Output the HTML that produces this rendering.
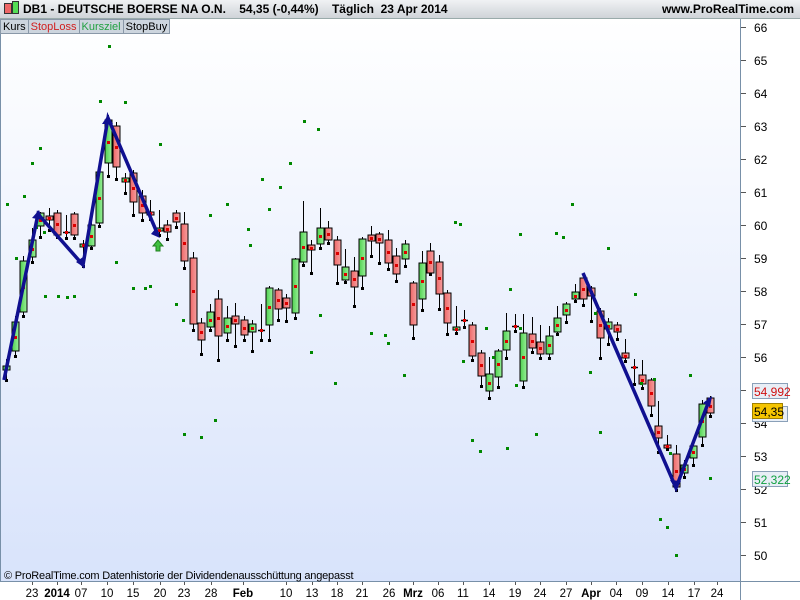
<!DOCTYPE html>
<html><head><meta charset="utf-8"><style>
html,body{margin:0;padding:0;width:800px;height:600px;overflow:hidden;background:#fff;font-family:"Liberation Sans",sans-serif}
#hdr{position:absolute;left:0;top:0;width:800px;height:18px;background:linear-gradient(#f0f2f4,#cfd3d8);border-bottom:1px solid #9aa;font-weight:bold;font-size:12px;line-height:18px}
#tabs{position:absolute;left:0;top:19px;height:15px;display:flex;font-size:11px;line-height:15px}
#tabs div{background:#cdd5de;border:1px solid #8a98a8;padding:0 2px;margin-right:-1px}
</style></head><body>
<svg width="800" height="600" style="position:absolute;left:0;top:0">
<defs><linearGradient id="bg" x1="0" y1="0" x2="0" y2="1"><stop offset="0" stop-color="#ffffff"/><stop offset="1" stop-color="#d8e3fb"/></linearGradient>
<linearGradient id="rd" x1="0" x2="1"><stop offset="0" stop-color="#e66"/><stop offset="1" stop-color="#f5a0a0"/></linearGradient>
<linearGradient id="gr" x1="0" x2="1"><stop offset="0" stop-color="#4fd04f"/><stop offset="1" stop-color="#9af09a"/></linearGradient>
</defs>
<rect x="0" y="18" width="740" height="563" fill="url(#bg)"/>
<line x1="0.5" y1="18" x2="0.5" y2="581" stroke="#7890a8"/>
<line x1="740.5" y1="18" x2="740.5" y2="600" stroke="#7890a8"/>
<line x1="0" y1="581.5" x2="800" y2="581.5" stroke="#7890a8"/>
<g id="ax" font-size="12" fill="#000"></g>
<g id="g"></g>
<g font-size="11.5" text-anchor="middle">
<text x="32" y="597">23</text><text x="57" y="597" font-weight="bold">2014</text><text x="81" y="597">07</text><text x="107" y="597">10</text><text x="133" y="597">15</text><text x="160" y="597">20</text><text x="184" y="597">23</text><text x="211" y="597">28</text><text x="243" y="597" font-weight="bold">Feb</text><text x="286" y="597">10</text><text x="312" y="597">13</text><text x="337" y="597">18</text><text x="362" y="597">21</text><text x="389" y="597">26</text><text x="413" y="597" font-weight="bold">Mrz</text><text x="438" y="597">06</text><text x="463" y="597">11</text><text x="489" y="597">14</text><text x="515" y="597">19</text><text x="540" y="597">24</text><text x="566" y="597">27</text><text x="591" y="597" font-weight="bold">Apr</text><text x="616" y="597">04</text><text x="642" y="597">09</text><text x="668" y="597">14</text><text x="694" y="597">17</text><text x="717" y="597">24</text>
</g>
<g font-size="12">
<text x="754" y="32">66</text><text x="754" y="65">65</text><text x="754" y="98">64</text><text x="754" y="131">63</text><text x="754" y="164">62</text><text x="754" y="197">61</text><text x="754" y="230">60</text><text x="754" y="263">59</text><text x="754" y="296">58</text><text x="754" y="329">57</text><text x="754" y="362">56</text><text x="754" y="428">54</text><text x="754" y="461">53</text><text x="754" y="494">52</text><text x="754" y="527">51</text><text x="754" y="560">50</text>
</g>
<rect x="752.5" y="383.5" width="35" height="15" fill="#e8eef6" stroke="#8aa0b8"/><text x="754" y="396" font-size="12" fill="#d01010">54,992</text>
<rect x="752.5" y="406.5" width="35" height="15" fill="#e8eef6" stroke="#8aa0b8"/><text x="776" y="419" font-size="12">3</text>
<rect x="752.5" y="403.5" width="30" height="15" fill="#f5c400" stroke="#a08000"/><text x="754" y="416" font-size="12">54,35</text>
<rect x="752.5" y="471.5" width="35" height="15" fill="#e8eef6" stroke="#8aa0b8"/><text x="754" y="484" font-size="12" fill="#10a040">52,322</text>
<path d="M4 380L38 214L83 265L108 118L158 235" fill="none" stroke="#101090" stroke-width="3.5"/>
<path d="M583 273L676 488L710 398" fill="none" stroke="#101090" stroke-width="3.5"/>
<path d="M32 218L39 210L43 220Z M76 262L85 268L83 257Z M102 124L108 115L113 124Z M151 234L160 238L156 228Z M670 480L676 490L681 481Z M703 403L712 396L710 407Z" fill="#101090"/>
<path d="M158 240L153 246H156V251H160V246H163Z" fill="#40c040" stroke="#208020"/>
<text x="4" y="579" font-size="11" letter-spacing="-0.2">© ProRealTime.com  Datenhistorie der Dividendenausschüttung angepasst</text>
</svg>
<div id="hdr"><span style="position:absolute;left:4px;top:3px;width:6px;height:9px;background:#e66;border:1px solid #333"></span><span style="position:absolute;left:12px;top:1px;width:5px;height:11px;background:#5d5;border:1px solid #333"></span><span style="position:absolute;left:23px">DB1 - DEUTSCHE BOERSE NA O.N.&nbsp;&nbsp;&nbsp;&nbsp;54,35 (-0,44%)&nbsp;&nbsp;&nbsp;&nbsp;Täglich&nbsp;&nbsp;23 Apr 2014</span><span style="position:absolute;right:6px">www.ProRealTime.com</span></div>
<div id="tabs"><div>Kurs</div><div style="color:#d02020">StopLoss</div><div style="color:#20a040">Kursziel</div><div>StopBuy</div></div>
<script>
var ax=document.getElementById('ax'),s='';
for(var p=50;p<=66;p++){var y=27+(66-p)*33;s+='<line x1="741" x2="746" y1="'+(y+.5)+'" y2="'+(y+.5)+'" stroke="#555"/>';}
[32,57,81,107,133,160,184,211,243,286,312,337,362,389,413,438,463,489,515,540,566,591,616,642,668,694,717].forEach(function(x){s+='<line x1="'+(x+.5)+'" x2="'+(x+.5)+'" y1="582" y2="585" stroke="#555"/>';});
ax.innerHTML=s;
var C=[[6,366,370,359,380,'g'],[15,322,351,316,356,'g'],[23,261,312,256,316,'g'],[32,240,257,228,262,'g'],[40,213,226,212,237,'g'],[49,216,220,208,230,'r'],[57,213,235,210,237,'r'],[66,232,232,215,238,'x'],[74,214,235,212,238,'r'],[83,244,246,240,266,'g'],[91,225,246,222,248,'g'],[99,172,223,165,226,'g'],[108,120,163,115,176,'g'],[116,126,167,122,179,'r'],[125,178,182,173,193,'g'],[133,173,202,170,215,'r'],[142,196,213,190,220,'r'],[150,212,214,200,219,'r'],[159,228,231,210,235,'g'],[167,225,232,220,239,'r'],[176,213,222,210,227,'r'],[184,224,261,212,268,'r'],[193,258,324,252,330,'r'],[201,323,340,318,354,'r'],[210,312,327,304,330,'g'],[218,299,336,290,360,'r'],[227,318,333,306,340,'g'],[235,316,324,303,346,'r'],[244,320,335,316,340,'r'],[252,324,332,320,351,'g'],[261,330,330,304,340,'x'],[269,288,325,286,340,'g'],[278,290,309,288,320,'r'],[286,298,308,294,321,'r'],[295,259,313,258,318,'g'],[303,232,262,201,265,'g'],[311,245,250,240,273,'r'],[320,228,244,208,248,'g'],[328,228,240,221,243,'r'],[337,240,265,236,283,'r'],[345,267,280,249,282,'g'],[354,271,287,257,306,'r'],[362,239,276,237,288,'g'],[371,235,241,226,256,'r'],[379,234,243,232,263,'r'],[388,240,263,230,269,'r'],[396,256,274,248,281,'r'],[405,244,259,240,266,'g'],[413,283,325,281,338,'r'],[422,263,299,251,310,'g'],[430,251,273,243,274,'r'],[439,262,294,255,309,'r'],[447,293,323,290,334,'r'],[456,327,330,306,333,'g'],[464,320,320,310,327,'x'],[472,325,356,322,360,'r'],[481,353,376,350,386,'r'],[489,374,391,357,398,'g'],[498,351,377,349,387,'g'],[506,331,350,313,358,'g'],[515,326,326,314,331,'x'],[523,333,381,314,387,'g'],[532,334,348,317,352,'r'],[540,342,354,325,358,'r'],[549,336,354,326,358,'g'],[557,318,332,306,334,'g'],[566,304,315,302,322,'g'],[575,292,299,284,301,'g'],[583,278,299,274,305,'r'],[591,288,296,286,321,'r'],[600,311,338,308,358,'r'],[608,322,329,318,344,'g'],[617,325,332,322,339,'r'],[625,353,358,339,361,'r'],[634,367,367,359,384,'x'],[642,375,384,360,388,'r'],[651,380,406,378,415,'r'],[658,426,438,401,452,'r'],[667,445,446,435,449,'r'],[676,454,487,445,490,'r'],[684,465,473,460,477,'g'],[693,446,458,440,465,'g'],[702,404,437,400,445,'g'],[710,398,413,396,416,'r']];
var G=[[109,46],[100,101],[125,102],[160,144],[40,148],[32,163],[24,196],[7,204],[16,258],[45,296],[58,296],[67,297],[74,296],[116,262],[133,288],[145,288],[150,286],[176,304],[183,320],[184,434],[201,437],[215,420],[210,215],[227,204],[269,209],[304,121],[318,129],[290,163],[280,187],[250,245],[248,229],[262,179],[320,315],[311,352],[335,383],[371,333],[385,335],[388,343],[404,375],[463,361],[472,440],[493,357],[486,328],[480,451],[460,224],[510,289],[516,385],[507,448],[520,234],[536,434],[556,233],[563,237],[572,204],[595,313],[608,248],[590,372],[600,432],[635,294],[641,383],[654,379],[660,519],[667,527],[676,555],[670,453],[690,375],[710,478],[455,222],[520,328],[36,227],[44,232]];
s='';
C.forEach(function(c){var x=c[0],t=c[1],b=c[2];
s+='<line x1="'+(x+.5)+'" x2="'+(x+.5)+'" y1="'+c[3]+'" y2="'+c[4]+'" stroke="#000"/>';
s+='<rect x="'+(x-1)+'" y="'+(c[4]-1)+'" width="3" height="3" fill="#000"/>';
if(c[5]=='x'){s+='<line x1="'+(x-3)+'" x2="'+(x+4)+'" y1="'+(t+.5)+'" y2="'+(t+.5)+'" stroke="#000" stroke-width="1.5"/>';}
else{var h=Math.max(b-t,3);s+='<rect x="'+(x-3)+'" y="'+t+'" width="7" height="'+h+'" fill="url(#'+(c[5]=='g'?'gr':'rd')+')" stroke="#000"/>';}
s+='<rect x="'+(x-1)+'" y="'+Math.round((t+b)/2-1)+'" width="3" height="3" fill="#d00"/>';});
G.forEach(function(d){s+='<rect x="'+(d[0]-1)+'" y="'+(d[1]-1)+'" width="3" height="3" fill="#080"/>';});
document.getElementById('g').innerHTML=s;
</script>
</body></html>
